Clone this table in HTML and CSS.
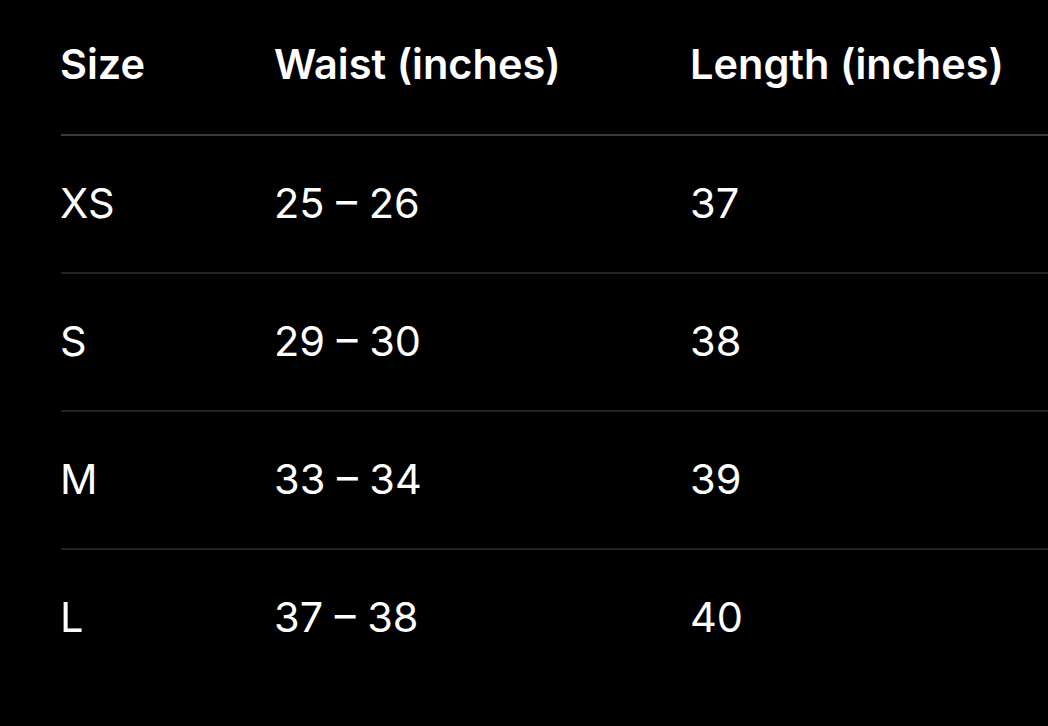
FILE: index.html
```html
<!DOCTYPE html>
<html lang="en">
<head>
<meta charset="utf-8">
<title>Size chart</title>
<link rel="stylesheet" href="styles.css">
</head>
<body>
<div class="chart">
  <div class="row head">
    <div class="cell">Size</div>
    <div class="cell">Waist (inches)</div>
    <div class="cell">Length (inches)</div>
  </div>
  <div class="row">
    <div class="cell">XS</div>
    <div class="cell">25 – 26</div>
    <div class="cell">37</div>
  </div>
  <div class="row">
    <div class="cell">S</div>
    <div class="cell">29 – 30</div>
    <div class="cell">38</div>
  </div>
  <div class="row">
    <div class="cell">M</div>
    <div class="cell">33 – 34</div>
    <div class="cell">39</div>
  </div>
  <div class="row last">
    <div class="cell">L</div>
    <div class="cell">37 – 38</div>
    <div class="cell">40</div>
  </div>
</div>
</body>
</html>
```

FILE: styles.css
```css
html, body {
  margin: 0;
  padding: 0;
  background: #000;
}
body {
  width: 1048px;
  height: 726px;
  overflow: hidden;
  font-family: Inter, "Liberation Sans", sans-serif;
  color: #fff;
}
.chart {
  padding-left: 61px;
}
.row {
  display: grid;
  grid-template-columns: 213px 416px 1fr;
  align-items: center;
  height: 136px;
  border-bottom: 2px solid #232323;
  font-size: 41.5px;
  font-weight: 400;
}
.row.head {
  height: 129px;
  padding-bottom: 5px;
  border-bottom-color: #3a3a3a;
  font-weight: 600;
}
.row.last {
  border-bottom: none;
}
.cell {
  line-height: 1;
  white-space: nowrap;
}
.cell:first-child {
  margin-left: -1px;
}
```
